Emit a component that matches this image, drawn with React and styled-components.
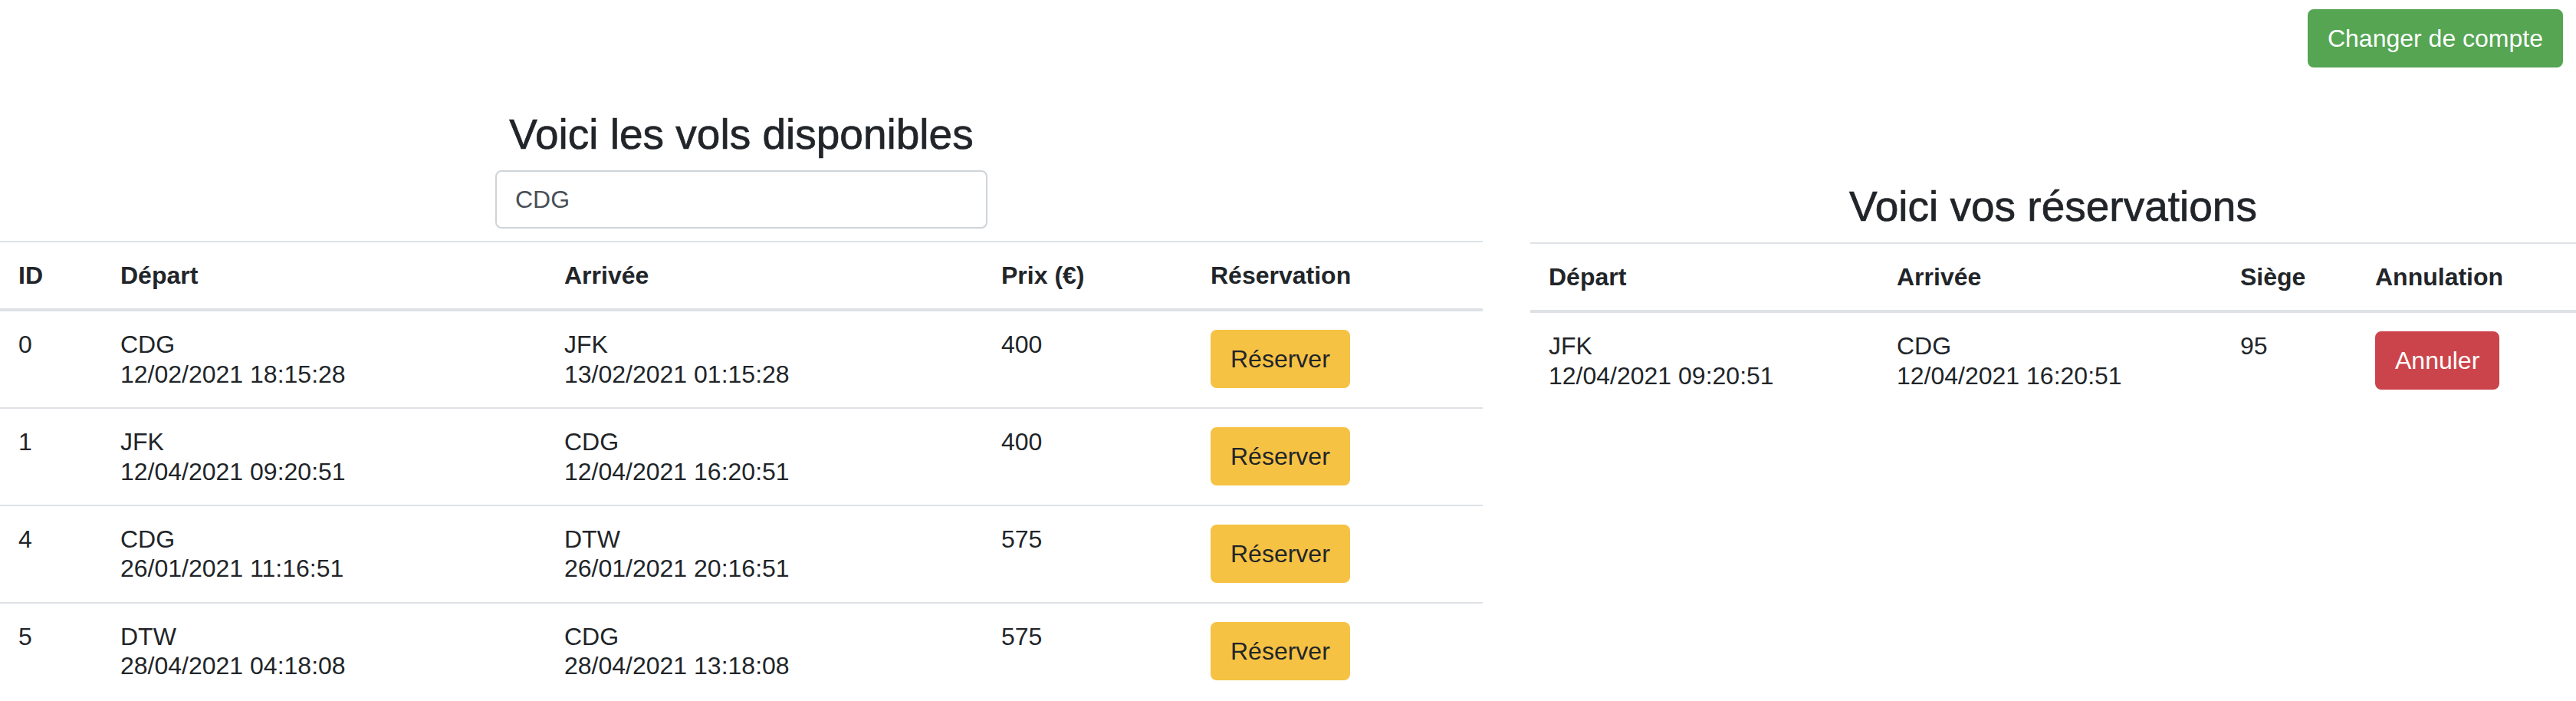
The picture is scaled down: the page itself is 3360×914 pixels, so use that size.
import React, { useState } from "react";
import styled, { createGlobalStyle } from "styled-components";

const flights = [
  { id: 0, from: "CDG", fromDate: "12/02/2021 18:15:28", to: "JFK", toDate: "13/02/2021 01:15:28", price: 400 },
  { id: 1, from: "JFK", fromDate: "12/04/2021 09:20:51", to: "CDG", toDate: "12/04/2021 16:20:51", price: 400 },
  { id: 4, from: "CDG", fromDate: "26/01/2021 11:16:51", to: "DTW", toDate: "26/01/2021 20:16:51", price: 575 },
  { id: 5, from: "DTW", fromDate: "28/04/2021 04:18:08", to: "CDG", toDate: "28/04/2021 13:18:08", price: 575 },
];

const reservations = [
  { from: "JFK", fromDate: "12/04/2021 09:20:51", to: "CDG", toDate: "12/04/2021 16:20:51", seat: 95 },
];

const App = () => {
  const [search, setSearch] = useState("CDG");

  return (
    <>
      <GlobalStyle />
      <StTopBar>
        <StButton $variant="success">Changer de compte</StButton>
      </StTopBar>
      <StColumns>
        <StColumn>
          <StTitle>Voici les vols disponibles</StTitle>
          <StSearch value={search} onChange={(e) => setSearch(e.target.value)} />
          <StTable>
            <colgroup>
              <StCol $w={133} />
              <StCol $w={579} />
              <StCol $w={570} />
              <StCol $w={273} />
              <StCol $w={379} />
            </colgroup>
            <thead>
              <tr>
                <StTh>ID</StTh>
                <StTh>Départ</StTh>
                <StTh>Arrivée</StTh>
                <StTh>Prix (€)</StTh>
                <StTh>Réservation</StTh>
              </tr>
            </thead>
            <tbody>
              {flights.map((f) => (
                <tr key={f.id}>
                  <StTd>{f.id}</StTd>
                  <StTd>
                    {f.from}
                    <br />
                    {f.fromDate}
                  </StTd>
                  <StTd>
                    {f.to}
                    <br />
                    {f.toDate}
                  </StTd>
                  <StTd>{f.price}</StTd>
                  <StTd>
                    <StButton $variant="warning">Réserver</StButton>
                  </StTd>
                </tr>
              ))}
            </tbody>
          </StTable>
        </StColumn>

        <StColumn $offset={94}>
          <StTitle>Voici vos réservations</StTitle>
          <StTable>
            <colgroup>
              <StCol $w={454} />
              <StCol $w={448} />
              <StCol $w={176} />
              <StCol $w={286} />
            </colgroup>
            <thead>
              <tr>
                <StTh>Départ</StTh>
                <StTh>Arrivée</StTh>
                <StTh>Siège</StTh>
                <StTh>Annulation</StTh>
              </tr>
            </thead>
            <tbody>
              {reservations.map((r, i) => (
                <tr key={i}>
                  <StTd>
                    {r.from}
                    <br />
                    {r.fromDate}
                  </StTd>
                  <StTd>
                    {r.to}
                    <br />
                    {r.toDate}
                  </StTd>
                  <StTd>{r.seat}</StTd>
                  <StTd>
                    <StButton $variant="danger">Annuler</StButton>
                  </StTd>
                </tr>
              ))}
            </tbody>
          </StTable>
        </StColumn>
      </StColumns>
    </>
  );
};

export default App;

const GlobalStyle = createGlobalStyle`
  * {
    box-sizing: border-box;
  }

  body {
    margin: 0;
    background: #ffffff;
    color: #212529;
    font-family: "Liberation Sans", Arial, sans-serif;
    font-size: 32px;
  }
`;

const StTopBar = styled.div`
  display: flex;
  justify-content: flex-end;
  padding: 12px 17px 0 0;
`;

const buttonColors = {
  success: { bg: "#55a553", fg: "#ffffff" },
  warning: { bg: "#f6c243", fg: "#212529" },
  danger: { bg: "#cc444b", fg: "#ffffff" },
};

const StButton = styled.button`
  display: inline-block;
  vertical-align: top;
  font-family: inherit;
  font-size: 32px;
  line-height: 1.5;
  padding: 12px 24px;
  border: 2px solid ${(p) => buttonColors[p.$variant].bg};
  border-radius: 8px;
  background: ${(p) => buttonColors[p.$variant].bg};
  color: ${(p) => buttonColors[p.$variant].fg};
  cursor: pointer;
  white-space: nowrap;
`;

const StColumns = styled.div`
  display: grid;
  grid-template-columns: 1934px 1364px;
  column-gap: 62px;
  align-items: start;
  margin-top: 54px;
`;

const StColumn = styled.div`
  display: flex;
  flex-direction: column;
  align-items: center;
  padding-top: ${(p) => p.$offset || 0}px;
`;

const StTitle = styled.h3`
  margin: 0 0 14px;
  font-size: 55px;
  font-weight: 500;
  line-height: 1.2;
  text-align: center;
  color: #212529;
  -webkit-text-stroke: 0.7px #212529;
`;

const StSearch = styled.input`
  width: 642px;
  height: 76px;
  margin: 0 0 16px;
  padding: 12px 24px;
  font-family: inherit;
  font-size: 32px;
  color: #495057;
  border: 2px solid #ced4da;
  border-radius: 8px;
  outline: none;
`;

const StTable = styled.table`
  width: 100%;
  table-layout: fixed;
  border-collapse: collapse;
  color: #212529;
`;

const StCol = styled.col`
  width: ${(p) => p.$w}px;
`;

const StTh = styled.th`
  padding: 24px;
  text-align: left;
  vertical-align: bottom;
  font-weight: 700;
  line-height: 1.2;
  border-top: 2px solid #dee2e6;
  border-bottom: 4px solid #dee2e6;
  white-space: nowrap;
`;

const StTd = styled.td`
  padding: 24px;
  vertical-align: top;
  line-height: 1.2;
  border-top: 2px solid #dee2e6;
  white-space: nowrap;
`;
